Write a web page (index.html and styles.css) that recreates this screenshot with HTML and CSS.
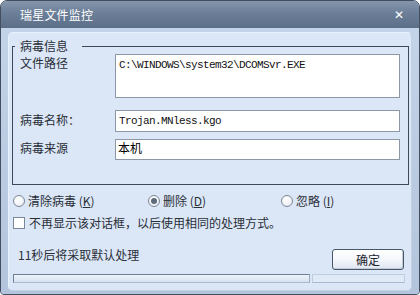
FILE: index.html
```html
<!DOCTYPE html>
<html lang="zh-CN">
<head>
    <meta charset="UTF-8">
    <title>瑞星文件监控</title>
    <link rel="stylesheet" href="styles.css">
</head>
<body>
    <div class="window">
        <div class="titlebar">
            <span class="title">瑞星文件监控</span>
            <span class="close">✕</span>
        </div>

        <div class="frame">
            <div class="panel">
                <fieldset class="group">
                    <legend>病毒信息</legend>
                    <div class="row">
                        <div class="label">文件路径</div>
                        <div class="field field-tall mono">C:\WINDOWS\system32\DCOMSvr.EXE</div>
                    </div>
                    <div class="row row-name">
                        <div class="label">病毒名称：</div>
                        <div class="field mono">Trojan.MNless.kgo</div>
                    </div>
                    <div class="row row-source">
                        <div class="label">病毒来源</div>
                        <div class="field field-cjk">本机</div>
                    </div>
                </fieldset>

                <div class="options">
                    <label class="option"><span class="radio"></span>清除病毒 (<u>K</u>)</label>
                    <label class="option"><span class="radio checked"></span>删除 (<u>D</u>)</label>
                    <label class="option"><span class="radio"></span>忽略 (<u>I</u>)</label>
                </div>

                <label class="check"><span class="checkbox"></span>不再显示该对话框，以后使用相同的处理方式。</label>

                <div class="footer">
                    <span class="countdown">11秒后将采取默认处理</span>
                    <button class="btn">确定</button>
                </div>

                <div class="statusbar">
                    <div class="status-main"></div>
                    <div class="status-side"></div>
                </div>
            </div>
        </div>
    </div>
</body>
</html>
```

FILE: styles.css
```css
* {
    margin: 0;
    padding: 0;
    box-sizing: border-box;
}

body {
    font-family: "Noto Sans CJK SC", "Liberation Sans", sans-serif;
    font-size: 12px;
    color: #2a2f38;
    background: #ffffff;
}

.window {
    width: 420px;
    height: 295px;
    border: 1px solid #434f60;
    border-radius: 7px 7px 4px 4px;
    overflow: hidden;
    display: flex;
    flex-direction: column;
    background: #aebfd6;
}

.titlebar {
    height: 27px;
    display: flex;
    align-items: center;
    justify-content: space-between;
    padding: 0 15px 0 19px;
    background: linear-gradient(180deg, #8596ac 0%, #6c7f98 45%, #5c6e88 100%);
    color: #ffffff;
}

.title {
    font-size: 12px;
    line-height: 14px;
    letter-spacing: 0.2px;
}

.close {
    font-size: 12px;
    font-weight: bold;
    font-family: "DejaVu Sans", sans-serif;
}

.frame {
    flex: 1;
    display: flex;
    padding: 4px 7px 3px 7px;
    background: linear-gradient(180deg, #c3d3e8 0%, #b3c5dc 100%);
}

.panel {
    flex: 1;
    display: flex;
    flex-direction: column;
    padding: 7px 2px 0 4px;
    background: #dbe7f7;
    border: 1px solid #e9f1fb;
    border-right-color: #c2d1e4;
    border-bottom-color: #c2d1e4;
    border-radius: 5px;
}

/* group box */
.group {
    margin: -1px 0 0 -1px;
    border: 1px solid #3e4858;
    padding: 1px 8px 24px 7px;
}

.group legend {
    margin-left: -5px;
    padding: 0 14px 0 5px;
    line-height: 14px;
    color: #2a2f38;
}

.row {
    display: flex;
    align-items: flex-start;
}

.row-name {
    margin-top: 12px;
    align-items: center;
}

.row-source {
    margin-top: 7px;
    align-items: center;
}

.label {
    width: 95px;
    line-height: 14px;
    padding-top: 2px;
}

.row-name .label,
.row-source .label {
    padding-top: 0;
    margin-top: -3px;
}

.field {
    flex: 1;
    height: 22px;
    background: #ffffff;
    border: 1px solid #8c98a6;
    padding: 2px 3px;
    line-height: 16px;
    color: #111;
    white-space: nowrap;
    overflow: hidden;
}

.field-tall {
    height: 44px;
}

.row-source .field {
    height: 21px;
}

.mono {
    font-family: "Liberation Mono", monospace;
    font-size: 11px;
    letter-spacing: -0.6px;
}

.field-cjk {
    padding: 0 2px;
    font-size: 12px;
    line-height: 15px;
    color: #000;
}

/* options */
.options {
    display: grid;
    grid-template-columns: 135px 133px auto;
    margin-top: 8px;
    height: 16px;
    align-items: center;
}

.option,
.check {
    display: flex;
    align-items: center;
    line-height: 16px;
    color: #2a2f38;
}

.option u {
    text-decoration: underline;
}

.radio {
    width: 12px;
    height: 12px;
    border: 1px solid #7b8898;
    border-radius: 50%;
    background: radial-gradient(circle at 40% 35%, #ffffff 0%, #f2f4f7 55%, #d9dee6 100%);
    margin-right: 3px;
    display: flex;
    align-items: center;
    justify-content: center;
}

.radio.checked::after {
    content: '';
    width: 6px;
    height: 6px;
    border-radius: 50%;
    background: #5f6b7a;
}

.check {
    margin-top: 6px;
}

.checkbox {
    width: 12px;
    height: 12px;
    border: 1px solid #7b8898;
    background: #ffffff;
    margin-right: 4px;
}

/* footer */
.footer {
    display: flex;
    align-items: flex-start;
    justify-content: space-between;
    margin-top: 18px;
    margin-right: 5px;
    padding-left: 5px;
}

.countdown {
    line-height: 14px;
    margin-top: -1px;
    color: #2a2f38;
}

.btn {
    width: 72px;
    height: 21px;
    font-family: inherit;
    font-size: 12px;
    color: #1e2430;
    border: 1px solid #48566a;
    border-radius: 3px;
    background: linear-gradient(180deg, #ffffff 0%, #f4f7fb 50%, #dfe6f0 100%);
    box-shadow: inset -1px -1px 0 #c2ccd9;
}

/* status bar */
.statusbar {
    display: flex;
    height: 9px;
    margin-top: 4px;
    margin-right: 4px;
}

.status-main {
    width: 297px;
    border: 1px solid #6e7f96;
    border-right-color: #9aabc2;
    border-bottom-color: #a9b9cf;
    background: linear-gradient(180deg, #eef3fa 0%, #d6e1ef 100%);
}

.status-side {
    flex: 1;
    margin-left: 2px;
    border: 1px solid #c0cde0;
    border-bottom-color: #a9b9cf;
    background: #e0e9f6;
}
```
